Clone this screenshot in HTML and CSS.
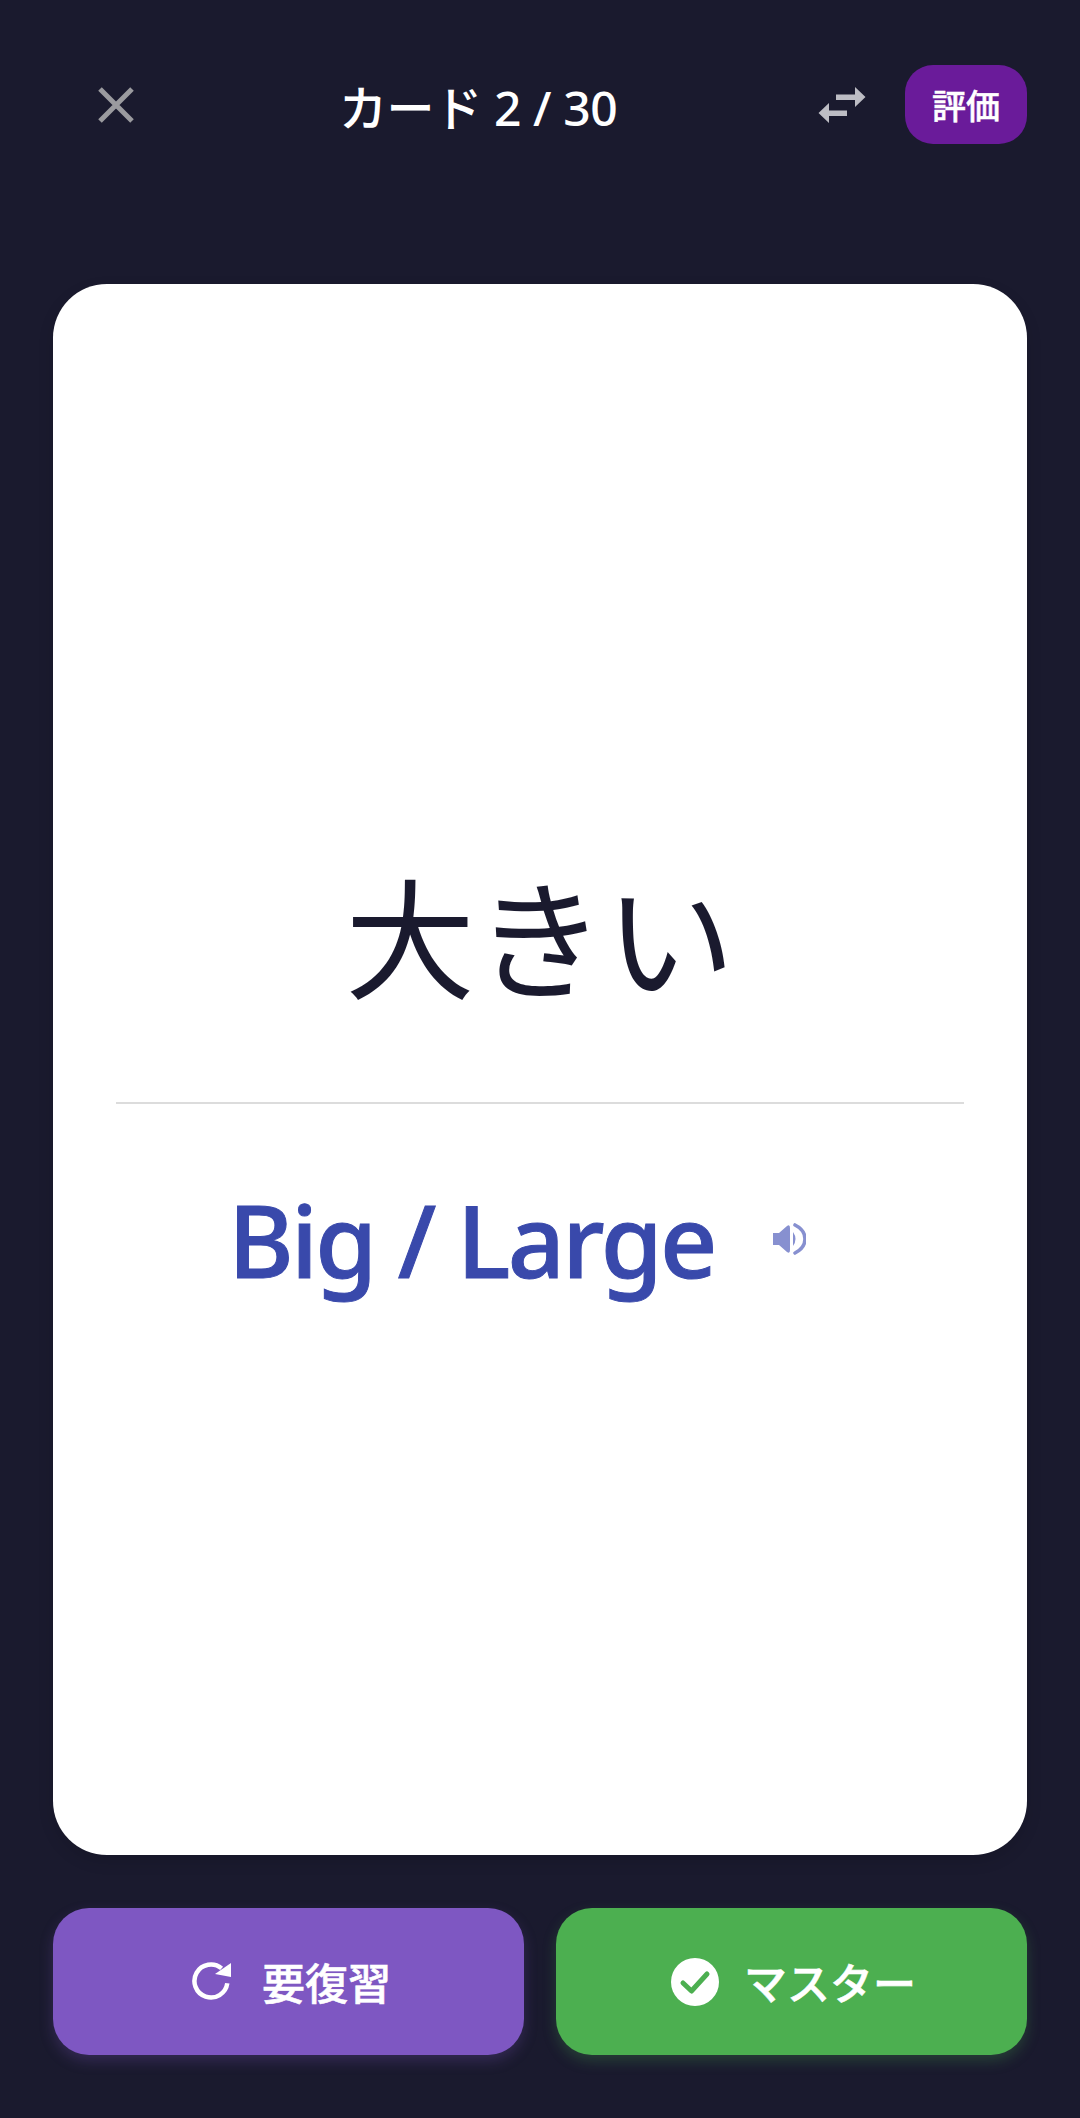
FILE: index.html
```html
<!DOCTYPE html>
<html lang="ja">
<head>
  <meta charset="UTF-8" />
  <title>カード 2 / 30</title>
  <meta name="viewport" content="width=device-width, initial-scale=1" />
  <link rel="stylesheet" href="styles.css">
</head>
<body>
  <div class="screen">
    <div class="top-bar">
      <button class="icon-btn close-btn" aria-label="閉じる">
        <svg width="36" height="36" viewBox="0 0 36 36"><path d="M2 2 L34 34 M34 2 L2 34" stroke="#9b9b9f" stroke-width="5" fill="none"/></svg>
      </button>
      <div class="card-count">カード 2 / 30</div>
      <button class="icon-btn swap-btn" aria-label="入れ替え">
        <svg width="48" height="36" viewBox="0 0 48 36"><path d="M18 7.500 H37 V0 L47.500 10 L37 20 V13 H18 Z" fill="#bdbdc4"/><path d="M29 23.500 H11 V16 L0.500 26 L11 36 V29 H29 Z" fill="#bdbdc4"/></svg>
      </button>
      <button class="rate-btn">評価</button>
    </div>

    <div class="card">
      <div class="front-text">大きい</div>
      <div class="divider"></div>
      <div class="back-row">
        <span class="back-text">Big / Large</span>
        <svg class="speaker" width="34" height="32" viewBox="0 0 34 32"><path d="M1 10 H7 L15 3 Q18 1 18 5 V27 Q18 31 15 29 L7 22 H1 Z" fill="#8790d0"/><path d="M21 9 Q26 16 21 23 Z" fill="#8790d0"/><path d="M23 2 Q33 7 33 16 Q33 25 23 30" stroke="#8790d0" stroke-width="3.600" stroke-linecap="round" fill="none"/></svg>
      </div>
    </div>

    <div class="bottom-bar">
      <button class="action-btn review-btn">
        <svg width="40" height="40" viewBox="0 0 40 40"><path d="M29.600 6.400 A16.500 16.500 0 1 0 35.300 21.300" stroke="#fff" stroke-width="4.500" fill="none"/><path d="M23 12 L39 15 L39 1 Z" fill="#fff"/></svg>
        要復習
      </button>
      <button class="action-btn master-btn">
        <svg width="48" height="48" viewBox="0 0 48 48"><circle cx="24" cy="24" r="24" fill="#fff"/><path d="M12 25 L20.500 33 L36 16" stroke="#4caf50" stroke-width="5" stroke-linecap="round" stroke-linejoin="round" fill="none"/></svg>
        マスター
      </button>
    </div>
  </div>
</body>
</html>
```

FILE: styles.css
```css
* {
  box-sizing: border-box;
}

body {
  margin: 0;
  background: #1a1a2e;
  font-family: "Noto Sans", "Noto Sans CJK JP", sans-serif;
}

button {
  font-family: inherit;
  border: none;
  padding: 0;
  cursor: pointer;
}

.screen {
  width: 1080px;
  height: 2118px;
  display: flex;
  flex-direction: column;
  padding: 65px 53px 63px;
}

.top-bar {
  display: flex;
  align-items: center;
  height: 79px;
}

.icon-btn {
  background: none;
  display: flex;
  align-items: center;
  justify-content: center;
}

.close-btn {
  margin-left: 45px;
}

.card-count {
  color: #fff;
  font-size: 48px;
  font-weight: 500;
  margin-left: 205px;
  letter-spacing: -0.4px;
  flex: 1;
}

.swap-btn {
  margin-right: 39px;
}

.rate-btn {
  width: 122px;
  height: 79px;
  border-radius: 28px;
  background: #6a1b9a;
  color: #fff;
  font-size: 34px;
  font-weight: 500;
  -webkit-text-stroke: 0.5px #fff;
}

.card {
  flex: 1;
  margin-top: 140px;
  background: #fff;
  border-radius: 54px;
  box-shadow: 0 6px 16px rgba(0, 0, 0, 0.12);
  display: flex;
  flex-direction: column;
  align-items: center;
  padding: 0 63px;
  justify-content: center;
}

.front-text {
  color: #1a1a2e;
  font-size: 130px;
  line-height: 176px;
  margin-top: 21px;
}

.divider {
  width: 100%;
  height: 2px;
  background: #dcdcdc;
  margin-top: 75px;
}

.back-row {
  display: flex;
  align-items: center;
  margin-top: 67px;
  padding: 0 46px 3px 0;
}

.back-text {
  color: #3949ab;
  font-size: 100px;
  font-weight: 500;
  letter-spacing: -2.700px;
  -webkit-text-stroke: 1px #3949ab;
  line-height: 136px;
}

.speaker {
  margin-left: 57px;
}

.bottom-bar {
  display: grid;
  grid-template-columns: 1fr 1fr;
  gap: 32px;
  margin-top: 53px;
}

.action-btn {
  height: 147px;
  border-radius: 36px;
  color: #fff;
  font-size: 43px;
  font-weight: 500;
  -webkit-text-stroke: 0.6px #fff;
  display: flex;
  align-items: center;
  justify-content: center;
}

.review-btn {
  background: #7e57c2;
  box-shadow: 0 6px 14px rgba(126, 87, 194, 0.25);
  gap: 30px;
  padding-left: 6px;
}

.master-btn {
  background: #4caf50;
  box-shadow: 0 6px 14px rgba(76, 175, 80, 0.25);
  gap: 25px;
  padding-left: 4px;
}
```
